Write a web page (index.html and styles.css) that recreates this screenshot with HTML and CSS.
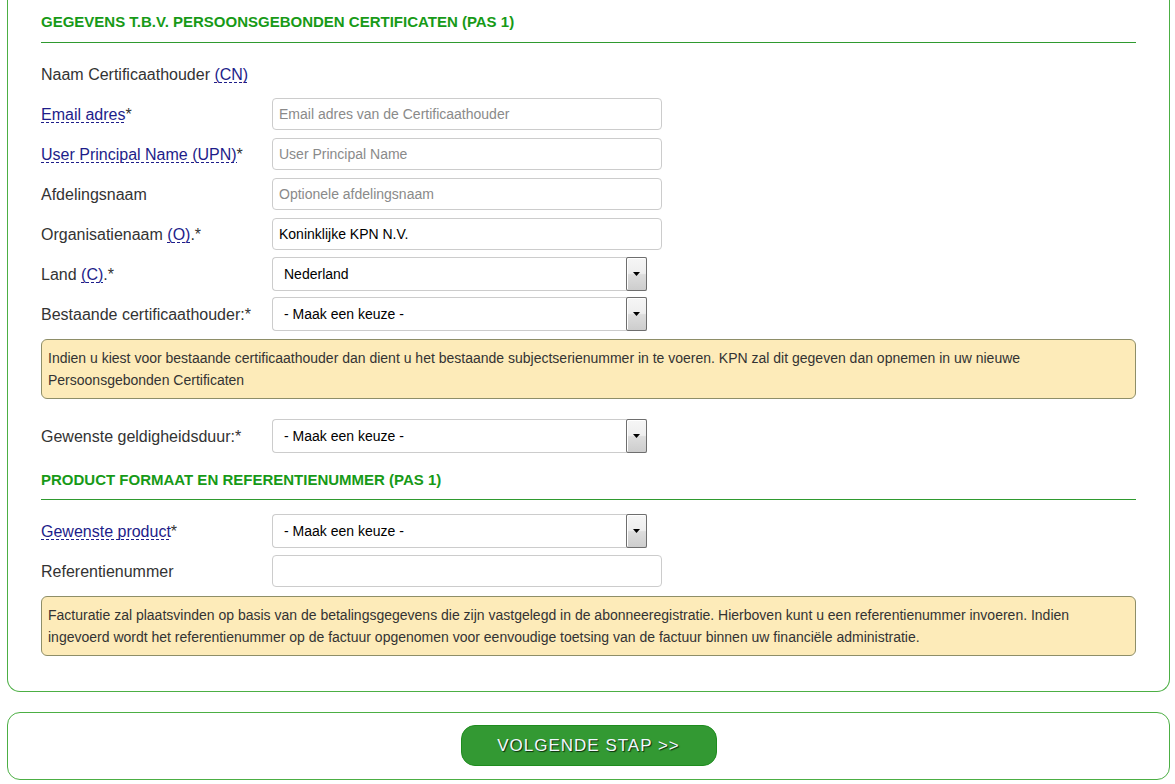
FILE: index.html
```html
<!DOCTYPE html>
<html lang="nl">
<head>
<meta charset="utf-8">
<title>Gegevens certificaten</title>
<link rel="stylesheet" href="styles.css">
</head>
<body>
<div class="panel main">
  <h2 class="section-title first">GEGEVENS T.B.V. PERSOONSGEBONDEN CERTIFICATEN (PAS 1)</h2>

  <div class="row">
    <div class="label">Naam Certificaathouder <abbr class="tip">(CN)</abbr></div>
  </div>
  <div class="row">
    <div class="label"><abbr class="tip">Email adres</abbr>*</div>
    <input class="input" type="text" placeholder="Email adres van de Certificaathouder">
  </div>
  <div class="row">
    <div class="label"><abbr class="tip">User Principal Name (UPN)</abbr>*</div>
    <input class="input" type="text" placeholder="User Principal Name">
  </div>
  <div class="row">
    <div class="label">Afdelingsnaam</div>
    <input class="input" type="text" placeholder="Optionele afdelingsnaam">
  </div>
  <div class="row">
    <div class="label">Organisatienaam <abbr class="tip">(O)</abbr>.*</div>
    <input class="input" type="text" value="Koninklijke KPN N.V.">
  </div>
  <div class="row">
    <div class="label">Land <abbr class="tip">(C)</abbr>.*</div>
    <div class="select"><span class="select-text">Nederland</span><span class="select-btn"><svg width="7" height="4" viewBox="0 0 7 4"><path d="M0 0h7L3.5 4z" fill="#000"/></svg></span></div>
  </div>
  <div class="row">
    <div class="label">Bestaande certificaathouder:*</div>
    <div class="select"><span class="select-text">- Maak een keuze -</span><span class="select-btn"><svg width="7" height="4" viewBox="0 0 7 4"><path d="M0 0h7L3.5 4z" fill="#000"/></svg></span></div>
  </div>

  <div class="note first-note">Indien u kiest voor bestaande certificaathouder dan dient u het bestaande subjectserienummer in te voeren. KPN zal dit gegeven dan opnemen in uw nieuwe Persoonsgebonden Certificaten</div>

  <div class="row">
    <div class="label">Gewenste geldigheidsduur:*</div>
    <div class="select"><span class="select-text">- Maak een keuze -</span><span class="select-btn"><svg width="7" height="4" viewBox="0 0 7 4"><path d="M0 0h7L3.5 4z" fill="#000"/></svg></span></div>
  </div>

  <h2 class="section-title second">PRODUCT FORMAAT EN REFERENTIENUMMER (PAS 1)</h2>

  <div class="row">
    <div class="label"><abbr class="tip">Gewenste product</abbr>*</div>
    <div class="select"><span class="select-text">- Maak een keuze -</span><span class="select-btn"><svg width="7" height="4" viewBox="0 0 7 4"><path d="M0 0h7L3.5 4z" fill="#000"/></svg></span></div>
  </div>
  <div class="row">
    <div class="label">Referentienummer</div>
    <input class="input" type="text">
  </div>

  <div class="note">Facturatie zal plaatsvinden op basis van de betalingsgegevens die zijn vastgelegd in de abonneeregistratie. Hierboven kunt u een referentienummer invoeren. Indien ingevoerd wordt het referentienummer op de factuur opgenomen voor eenvoudige toetsing van de factuur binnen uw financiële administratie.</div>
</div>

<div class="panel actions">
  <button class="next" type="button">VOLGENDE STAP &gt;&gt;</button>
</div>
</body>
</html>
```
FILE: styles.css
```css
html, body {
  margin: 0;
  padding: 0;
  background: #ffffff;
}

body {
  font-family: "Liberation Sans", Arial, sans-serif;
  color: #333333;
  font-size: 16px;
}

.panel {
  margin: 0 5px 0 7px;
  border: 1px solid #4caf44;
  border-radius: 0 0 13px 13px;
  background: #ffffff;
}

.main {
  border-top: none;
  padding: 10px 33px 35px 33px;
}

.section-title {
  margin: 0;
  font-size: 15px;
  font-weight: bold;
  line-height: 22px;
  color: #179a17;
  border-bottom: 1px solid #2f9a2f;
}

.section-title.first {
  padding: 1px 0 9px 0;
  margin-bottom: 11px;
}

.section-title.second {
  padding: 13px 0 8px 0;
  margin-bottom: 11px;
}

.row {
  display: flex;
  align-items: center;
  height: 40px;
}

.label {
  width: 231px;
  flex: none;
  line-height: 20px;
  padding-top: 2px;
}

.tip {
  color: #1d1d8a;
  text-decoration: none;
  background-image: linear-gradient(to right, #1d1d8a 60%, transparent 60%);
  background-size: 5px 1px;
  background-repeat: repeat-x;
  background-position: 0 100%;
}

.input {
  box-sizing: border-box;
  width: 390px;
  height: 32px;
  margin: 0;
  padding: 0 6px;
  border: 1px solid #cccccc;
  border-radius: 4px;
  font-family: "Liberation Sans", Arial, sans-serif;
  font-size: 14px;
  color: #000000;
  background: #ffffff;
  outline: none;
}

.input::placeholder {
  color: #8a8a8a;
}

.select {
  box-sizing: border-box;
  width: 375px;
  height: 34px;
  display: flex;
  align-items: stretch;
  border: 1px solid #cccccc;
  border-right: none;
  border-radius: 4px 0 0 4px;
  background: #ffffff;
}

.select-text {
  flex: 1;
  display: flex;
  align-items: center;
  padding-left: 11px;
  font-size: 14px;
  color: #000000;
}

.select-btn {
  box-sizing: border-box;
  width: 21px;
  margin-top: -1px;
  margin-bottom: -1px;
  display: flex;
  align-items: center;
  justify-content: center;
  border: 1px solid #6e6e6e;
  border-radius: 2px;
  background: linear-gradient(#f6f6f6 0%, #eeeeee 48%, #dddddd 52%, #cdcdcd 100%);
  box-shadow: inset 1px 1px 0 #ffffff;
}

.note {
  margin-top: 5px;
  padding: 7px 6px 7px 6px;
  font-size: 14px;
  line-height: 22px;
  color: #333333;
  background: #fdebb9;
  border: 1px solid #8e8e68;
  border-radius: 6px;
}

.first-note {
  margin-bottom: 17px;
}

.actions {
  margin-top: 20px;
  border-radius: 13px;
  padding: 12px 0 13px 0;
  display: flex;
  justify-content: center;
}

.next {
  box-sizing: border-box;
  width: 256px;
  height: 41px;
  margin: 0;
  padding: 0;
  border: 1px solid #1e8c1e;
  border-radius: 14px;
  background: #339933;
  color: #f2f8ff;
  font-family: "Liberation Sans", Arial, sans-serif;
  font-size: 17px;
  letter-spacing: 1px;
  text-shadow: 1px 1px 1px #0b2a0b;
  cursor: pointer;
}
```
